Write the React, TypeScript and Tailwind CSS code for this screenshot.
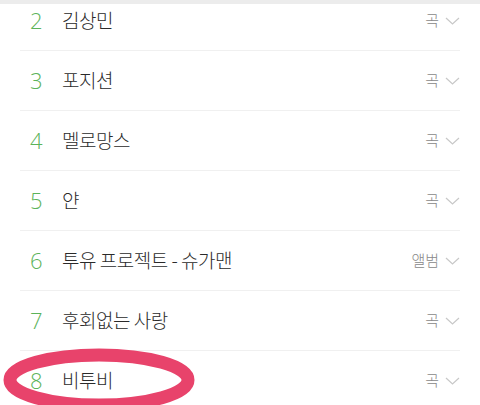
const rows = [
  { no: 2, title: "김상민", kind: "곡" },
  { no: 3, title: "포지션", kind: "곡" },
  { no: 4, title: "멜로망스", kind: "곡" },
  { no: 5, title: "얀", kind: "곡" },
  { no: 6, title: "투유 프로젝트 - 슈가맨", kind: "앨범" },
  { no: 7, title: "후회없는 사랑", kind: "곡" },
  { no: 8, title: "비투비", kind: "곡" },
];

function Chevron() {
  return (
    <svg width="15" height="10" viewBox="0 0 15 10" className="shrink-0">
      <path d="M1 2 L7.5 8 L14 2" fill="none" stroke="#c8c8c8" strokeWidth="1.2" />
    </svg>
  );
}

export default function App() {
  return (
    <div
      className="relative w-[480px] h-[405px] overflow-hidden bg-white"
      style={{ fontFamily: '"Noto Sans CJK KR", "Noto Sans", sans-serif' }}
    >
      <div className="relative z-10 h-[4px] bg-[#ececec]" />

      {/* search result rows */}
      <ul className="-mt-[13px] px-5">
        {rows.map((r) => (
          <li
            key={r.no}
            className="flex items-center h-[60px] border-b border-[#f0f0f0]"
          >
            <span
              className="w-[42px] pl-[10px] text-[22px] font-light text-[#5cb35a]"
              style={{ fontFamily: '"Open Sans", sans-serif' }}
            >
              {r.no}
            </span>
            <span className="flex-1 text-[19px] font-light text-[#2a2a2a] tracking-tight">
              {r.title}
            </span>
            <span className="text-[15px] font-light text-[#888] mr-[6px]">{r.kind}</span>
            <Chevron />
          </li>
        ))}
      </ul>

      {/* hand-drawn highlight */}
      <svg className="absolute left-0 top-0 pointer-events-none" width="480" height="405">
        <ellipse cx="99" cy="380" rx="89" ry="25" fill="none" stroke="#e8436b" strokeWidth="13" />
      </svg>
    </div>
  );
}
